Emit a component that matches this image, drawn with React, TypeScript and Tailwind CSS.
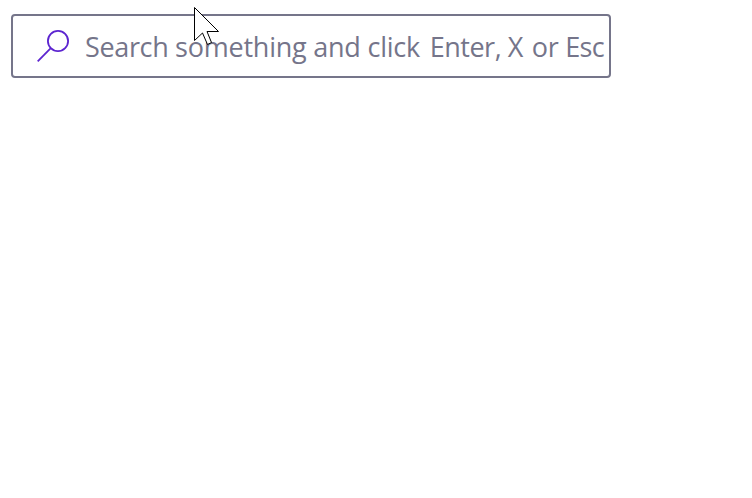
export default function App() {
  return (
    <div className="relative h-[498px] w-[752px] overflow-hidden bg-white pl-[11px] pt-[14px]">
      <div className="flex h-16 w-[600px] items-center rounded-[4px] border-2 border-[#75758a] pl-6">
        <svg className="h-9 w-9 shrink-0" viewBox="0 0 36 36" fill="none" stroke="#5c24d0" strokeWidth="1.8">
          <circle cx="21" cy="13" r="10.1" />
          <path d="M13.8 20.2 .7 33.3" />
        </svg>
        <div className="ml-3 whitespace-nowrap pt-px font-['Open_Sans','Noto_Sans',sans-serif] text-[27px] leading-9 tracking-[-0.23px] text-[#75758a]">
          <span className="tracking-[-0.35px]">Search </span>
          <span>something and click </span>
          <span className="ml-[3px] tracking-[-0.5px]">Enter, </span>
          <span>X </span>
          <span className="ml-[2px] tracking-[-0.3px]">or </span>
          <span className="tracking-[-0.6px]">Esc</span>
        </div>
      </div>
      <svg className="absolute left-[194px] top-[7px] h-[40px] w-[26px]" viewBox="0 0 26 40" fill="white" stroke="black">
        <path d="M.5.5V33.5L8.5 26 13.5 37.5 17.5 35.5 13 24.5H24.5Z" />
      </svg>
    </div>
  );
}
